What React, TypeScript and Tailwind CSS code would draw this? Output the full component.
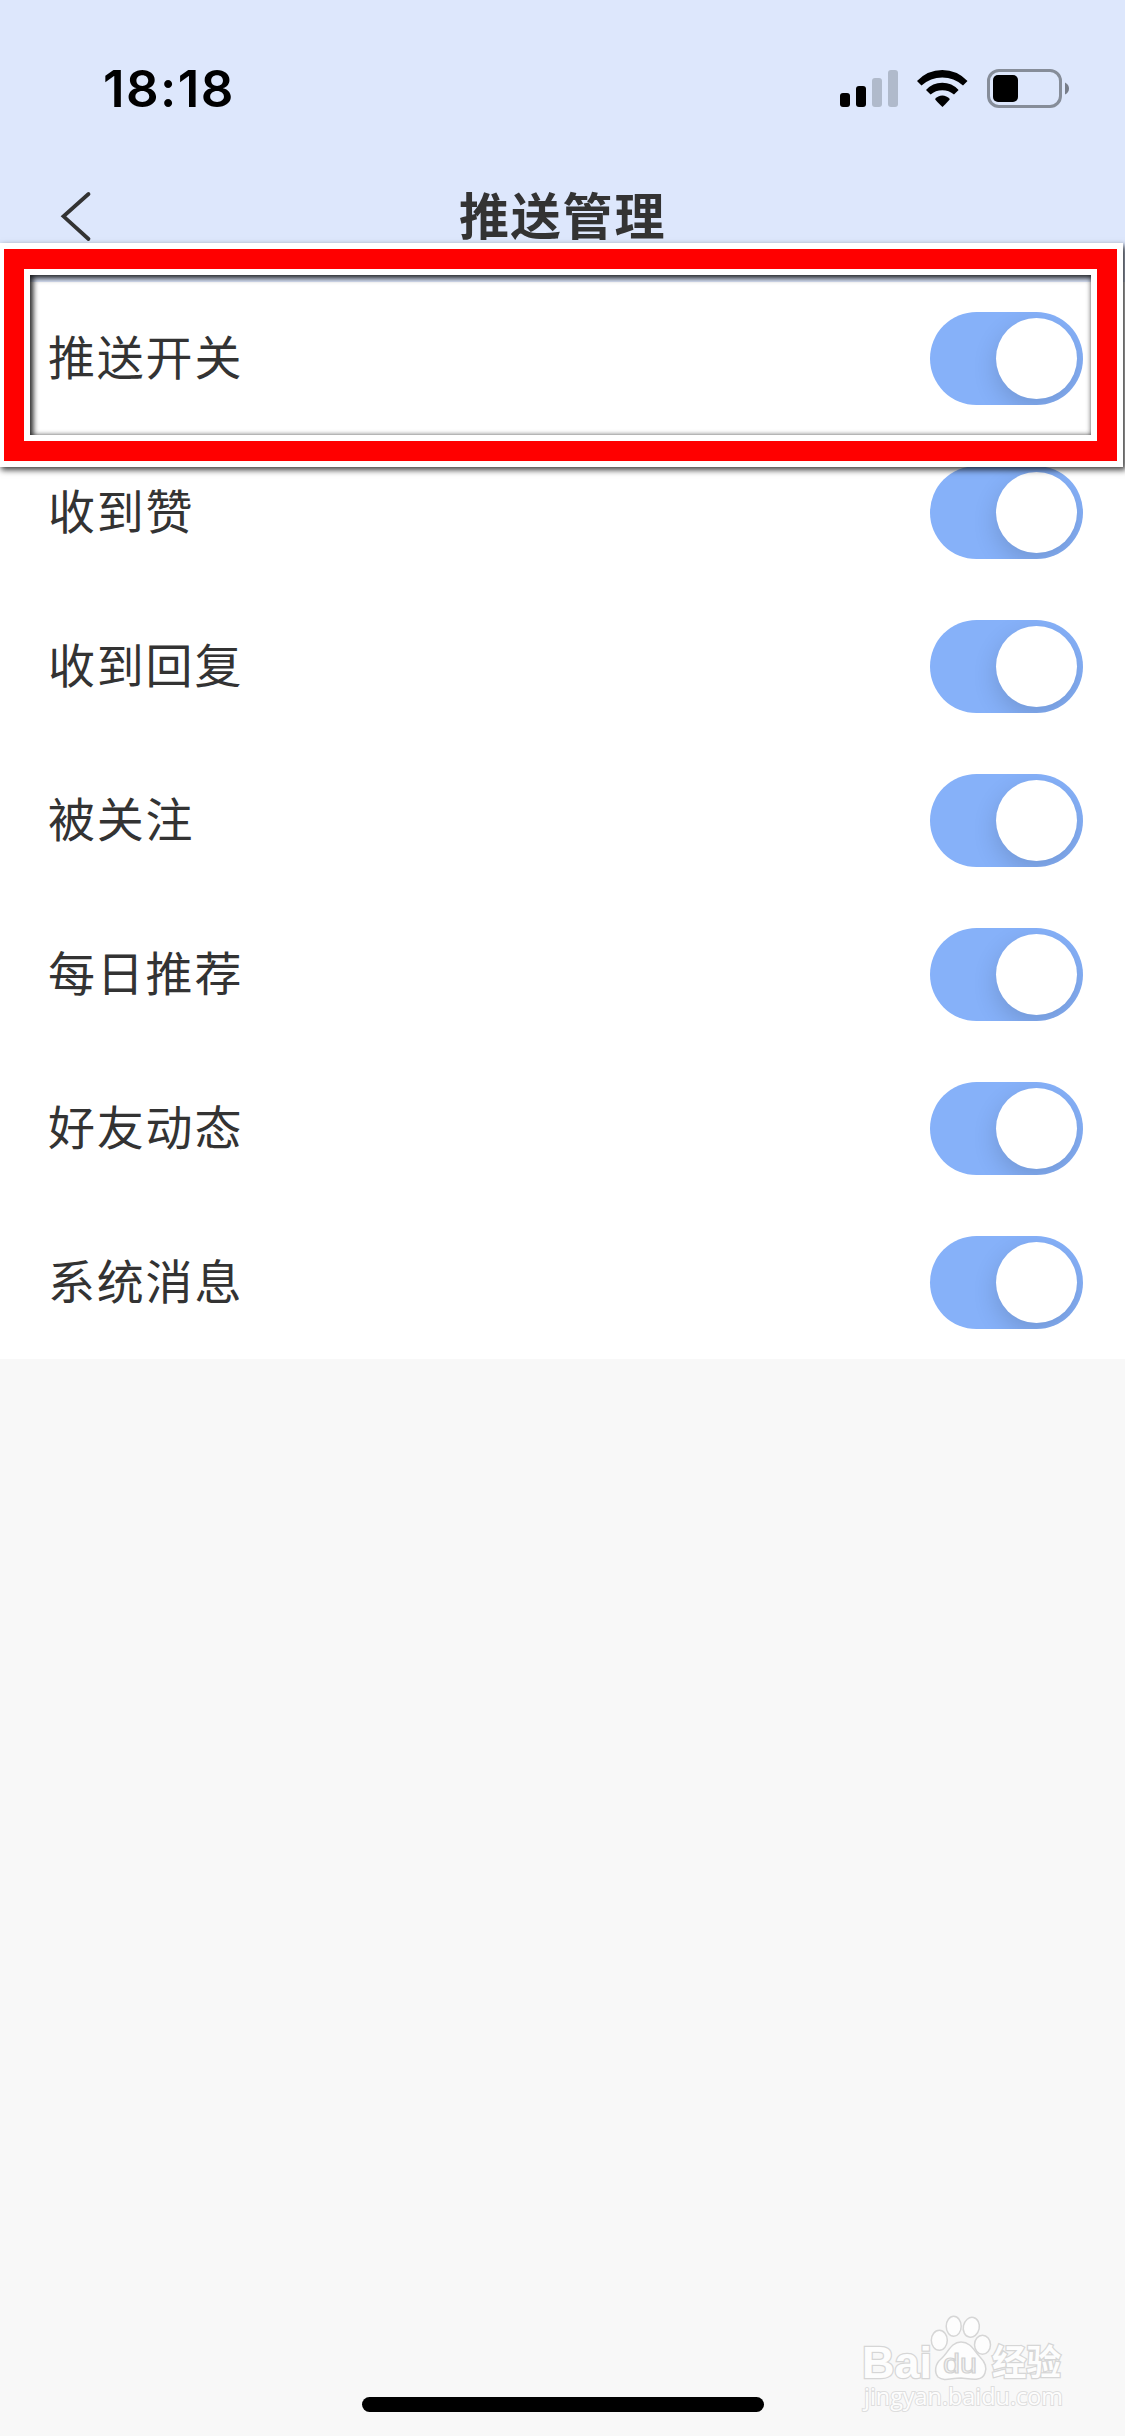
import { useState } from 'react';

const items = [
  '推送开关',
  '收到赞',
  '收到回复',
  '被关注',
  '每日推荐',
  '好友动态',
  '系统消息',
];

function StatusBar() {
  return (
    <div className="flex h-[172px] justify-between pl-[103px] pr-[56px]">
      <span className="mt-[59px] h-[60px] font-['Inter',sans-serif] text-[51px] font-semibold leading-[60px] tracking-[1.400px] text-black">
        18:18
      </span>
      <svg className="mt-[69px] h-[39px] w-[229px]" viewBox="0 0 229 39">
        <rect x="0" y="24" width="10" height="14" rx="3" />
        <rect x="16" y="17" width="10" height="21" rx="3" />
        <rect x="32" y="9" width="10" height="29" rx="3" fill="#b0bacb" />
        <rect x="48" y="1" width="10" height="37" rx="3" fill="#b0bacb" />
        <path d="M77 12 L81.500 16.500 Q90.500 8.500 102.300 8.500 Q114 8.500 123 16.500 L127.500 12 Q117 1 102.300 1 Q87.500 1 77 12 Z" />
        <path d="M86 21 L90.600 25.600 Q95.500 21.200 102.300 21.200 Q109 21.200 114 25.600 L118.600 21 Q112 13.800 102.300 13.800 Q92.500 13.800 86 21 Z" />
        <path d="M95 30 Q98 26.400 102.300 26.400 Q106.600 26.400 109.800 30 Q109.500 31.200 102.500 38 Q96 32 95 30 Z" />
        <rect x="148.500" y="1.500" width="72" height="36" rx="10.500" fill="none" stroke="#868d99" strokeWidth="3" />
        <rect x="153" y="6" width="25" height="27" rx="5" />
        <path d="M225 13.500 Q229 15.500 229 19.500 Q229 23.500 225 25.500 Z" fill="#777d89" />
      </svg>
    </div>
  );
}

function Header() {
  return (
    <header className="h-[282px] bg-[#dde7fc]">
      <StatusBar />
      <div className="flex h-[88px] items-center">
        <svg className="ml-[58px] h-[52px] w-[34px]" viewBox="0 0 34 52" fill="none">
          <path d="M30.500 4 L5.500 26.300 L30.500 49" stroke="#333333" strokeWidth="3.800" strokeLinecap="round" />
        </svg>
        <h1 className="mb-[6px] ml-[367px] font-['Noto_Sans_CJK_SC',sans-serif] text-[50px] font-bold leading-[72px] tracking-[1.800px] text-[#333333]">
          推送管理
        </h1>
      </div>
    </header>
  );
}

function Toggle() {
  const [on, setOn] = useState(true);

  return (
    <button
      type="button"
      role="switch"
      aria-checked={on}
      onClick={() => setOn(!on)}
      className={`flex h-[93px] w-[153px] overflow-hidden rounded-full p-[6px] ${on ? 'justify-end bg-[#86b1f9]' : 'justify-start bg-gray-200'}`}
    >
      <span className="h-[81px] w-[81px] rounded-full bg-white shadow-[0_9px_24px_rgba(0,0,0,0.150)]" />
    </button>
  );
}

function Watermark() {
  return (
    <svg
      className="absolute left-[855px] top-[2305px] h-[110px] w-[220px]"
      viewBox="855 2305 220 110"
      fill="#fdfdfd"
      stroke="#d6d6d6"
      strokeWidth="1.500"
    >
      <text x="862" y="2378" textLength="70" lengthAdjust="spacingAndGlyphs" fontSize="45" fontWeight="700" fontFamily="Liberation Sans, sans-serif" paintOrder="stroke" strokeWidth="2.500">
        Bai
      </text>
      <ellipse cx="939.300" cy="2340.300" rx="8" ry="10" />
      <ellipse cx="953.700" cy="2326.300" rx="7.500" ry="10" />
      <ellipse cx="971.300" cy="2327.300" rx="8" ry="10" transform="rotate(12 971.300 2327.300)" />
      <ellipse cx="982.500" cy="2344.700" rx="8" ry="9.500" />
      <path d="M961 2342 C971 2342 974 2351 980 2357 C986 2363 987 2368 985 2373 C982 2382 971 2379 961 2378 C951 2378 944 2382 938 2377 C934 2372 935 2364 941 2359 C948 2353 951 2342 961 2342 Z" />
      <text x="943" y="2373" textLength="34" lengthAdjust="spacingAndGlyphs" fontSize="27" fontFamily="Liberation Sans, sans-serif" fill="#f4f4f4" stroke="#d2d2d2" strokeWidth="1.200">
        du
      </text>
      <text x="992" y="2375" textLength="69" lengthAdjust="spacingAndGlyphs" fontSize="35" fontWeight="700" fontFamily="Noto Sans CJK SC, sans-serif" paintOrder="stroke" strokeWidth="2.500">
        经验
      </text>
      <text x="864" y="2405" textLength="199" lengthAdjust="spacingAndGlyphs" fontSize="24" fontFamily="Open Sans, sans-serif" paintOrder="stroke" strokeWidth="2" stroke="#dedede">
        jingyan.baidu.com
      </text>
    </svg>
  );
}

function App() {
  return (
    <div className="relative h-[2436px] w-[1125px] overflow-hidden bg-[#f8f8f8]">
      <Header />
      <ul className="flex flex-col gap-[61px] bg-white py-[30px] pl-[48px] pr-[42px]">
        {items.map((item) => (
          <li key={item} className="flex h-[93px] items-center justify-between">
            <span className="mb-[8px] font-['Noto_Sans_CJK_SC',sans-serif] text-[47px] leading-[68px] tracking-[1.800px] text-[#333333]">
              {item}
            </span>
            <Toggle />
          </li>
        ))}
      </ul>

      {/* highlight round the first row */}
      <div className="pointer-events-none absolute left-[-2px] top-[243px] h-[224px] w-[1125px] border-[6px] border-white shadow-[3px_3px_6px_rgba(0,0,0,0.750)]">
        <div className="h-full w-full border-[20px] border-[#ff0000]">
          <div className="h-full w-full border-[6px] border-white shadow-[inset_2px_2px_6px_rgba(0,0,0,0.800)]">
            <div className="h-full w-full shadow-[inset_2px_2px_6px_rgba(0,0,0,0.600)]" />
          </div>
        </div>
      </div>

      <Watermark />
      <div className="absolute left-[362px] top-[2397px] h-[15px] w-[402px] rounded-full bg-black" />
    </div>
  );
}

export default App;
